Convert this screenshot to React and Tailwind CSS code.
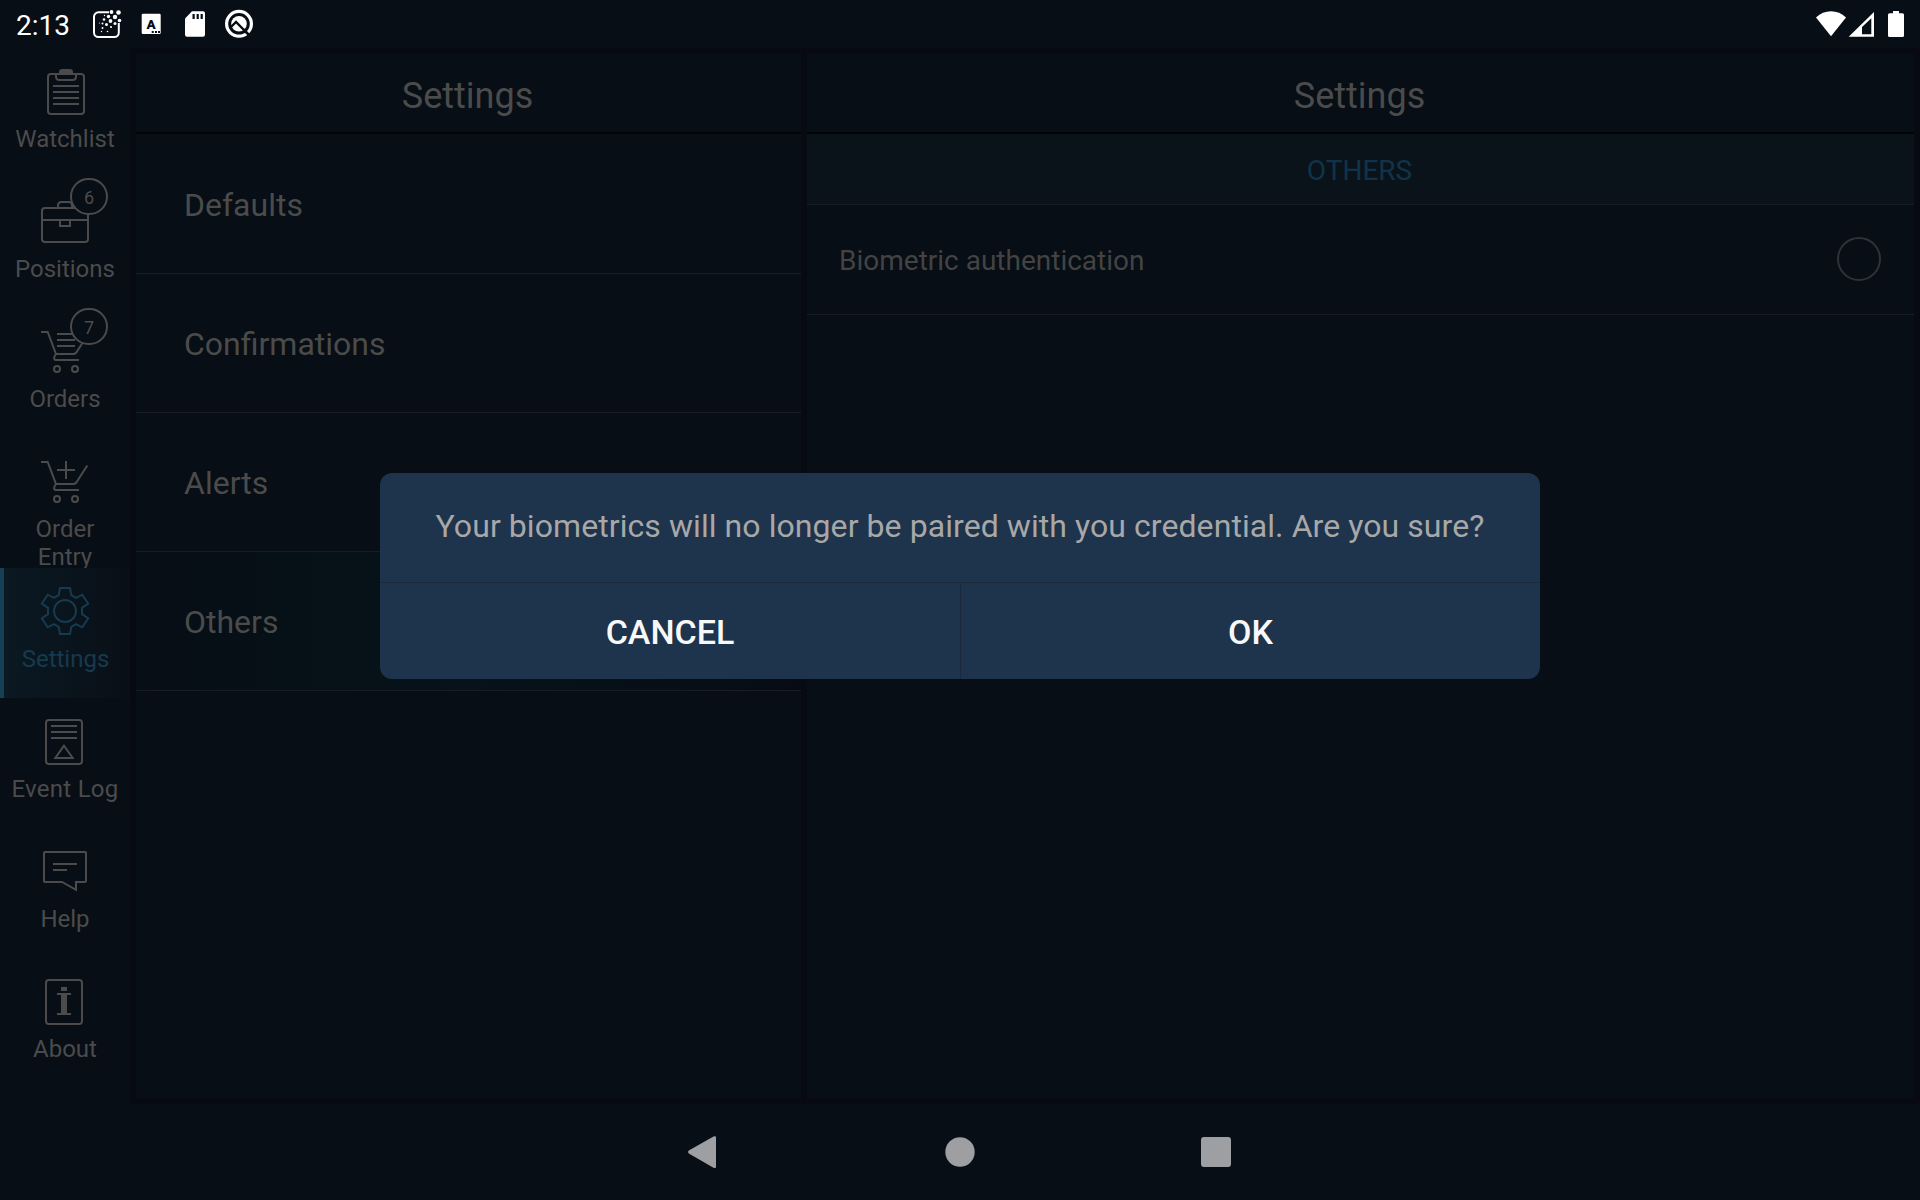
import React from "react";

const GEAR =
  "60,20 70,20 71.3,27 76,29.8 82.3,26.7 88.2,35.7 82,39.8 82,46.2 88.2,50.3 82.3,59.3 76,56.2 71.3,59 70,66 60,66 58.7,59 54,56.2 47.7,59.3 41.8,50.3 48,46.2 48,39.8 41.8,35.7 47.7,26.7 54,29.8 58.7,27";

function Cart() {
  return (
    <>
      <path d="M41 24h6.7L56 46h17.5q2.6 0 4-3.3L87.3 27.5" />
      <path d="M56 46q-2.6 3.4-1.7 5 .5 1 1.7 1h23" />
      <circle cx="57" cy="61" r="3" />
      <circle cx="75" cy="61" r="3" />
    </>
  );
}

const ICONS = {
  watchlist: (
    <>
      <rect x="48" y="26" width="36" height="40" rx="3" />
      <path d="M59 26v-2q0-3 3-3h8q3 0 3 3v2z" fill="currentColor" stroke="none" />
      <path d="M56 26v2.5q0 3.5 3.5 3.5h13q3.500 0 3.500-3.500V26M53 38h26M53 44h26M53 50h26M53 56h26" />
    </>
  ),
  positions: (
    <>
      <rect x="42" y="30" width="46" height="34" rx="3" />
      <path d="M42 42h46M60 42v6h10v-6M58 30v-2.500q0-3.500 3.500-3.500h7q3.500 0 3.500 3.500V30" />
    </>
  ),
  orders: (
    <>
      <Cart />
      <path d="M57 26h18M57 32h18M57 38h18" />
    </>
  ),
  entry: (
    <>
      <Cart />
      <path d="M66 23v18M57 32h18" />
    </>
  ),
  settings: (
    <>
      <polygon points={GEAR} />
      <circle cx="65" cy="43" r="11" />
    </>
  ),
  log: (
    <>
      <rect x="46" y="22" width="36" height="44" rx="3" />
      <path d="M51 28h26M51 34h26M51 40h26M64 47.700L55.300 60h17.400z" />
    </>
  ),
  help: (
    <>
      <path d="M45 24h40q1 0 1 1v28q0 1-1 1h-9v7.800L62 54H45q-1 0-1-1V25q0-1 1-1z" />
      <path d="M53 36h24M53 42h14" />
    </>
  ),
  about: (
    <>
      <rect x="46" y="22" width="36" height="44" rx="3" />
      <path d="M61 29h6v4h-6zM57 35h14v2h-4v18h4v2H57v-2h4V37h-4z" fill="currentColor" stroke="none" />
    </>
  ),
};

const NAV = [
  { icon: "watchlist", label: "Watchlist" },
  { icon: "positions", label: "Positions", badge: "6" },
  { icon: "orders", label: "Orders", badge: "7" },
  { icon: "entry", label: "Order Entry" },
  { icon: "settings", label: "Settings", active: true },
  { icon: "log", label: "Event Log" },
  { icon: "help", label: "Help" },
  { icon: "about", label: "About" },
];

const LABEL_STYLE = {
  "Order Entry": "",
  "Event Log": "-mx-5 whitespace-nowrap tracking-[0.25px]",
  Settings: "-mx-5 pl-px whitespace-nowrap",
};

function NavItem({ icon, label, badge, active }) {
  return (
    <div
      className={
        active
          ? "relative h-[130px] overflow-hidden border-l-4 border-[#173f56] bg-linear-to-r from-[#0a1922] to-[#090f17] text-[#163a4e]"
          : "relative h-[130px] overflow-hidden text-[#4b4b4b]"
      }
    >
      <div className={active ? "-ml-1 flex flex-col items-center" : "flex flex-col items-center"}>
        <svg className="h-[77px] w-[130px]" viewBox="0 0 130 77" fill="none" stroke="currentColor" strokeWidth="2">
          {ICONS[icon]}
        </svg>
        <span className="w-[120px] px-2.5 text-center text-2xl leading-7">
          <span className={LABEL_STYLE[label] ?? "-mx-5 whitespace-nowrap"}>{label}</span>
        </span>
      </div>
      {badge && (
        <span className="absolute top-0 left-[70px] flex h-[37px] w-[38px] items-center justify-center rounded-full border-2 border-[#4b4b4b] bg-[#070e15] pt-[3px] text-lg leading-none">
          {badge}
        </span>
      )}
    </div>
  );
}

const DOTS = [
  [118.500, 12.500, 2.300], [111.500, 12, 1.900], [115, 17, 2.200], [119.500, 20.500, 1.800], [108.500, 16.500, 1.700],
  [110.500, 21, 1.900], [115, 23.500, 1.500], [104, 19.500, 1.300], [106.500, 24.500, 1.500], [111, 27, 1.100],
  [102.500, 23.500, 1], [102.500, 28, 1], [107.500, 31.500, 0.800], [99.500, 23, 0.600], [101.500, 31.500, 0.700], [104.500, 15.500, 0.700],
];

function StatusBar() {
  return (
    <div className="flex h-12 items-center justify-between">
      <div className="flex items-center">
        <span className="w-[84px] pt-[3px] pl-4 text-[28px] leading-none text-white">2:13</span>
        <svg className="h-12 w-[180px] text-white" viewBox="84 0 180 48" fill="none">
          <path d="M109 12.300H98.500a4.500 4.500 0 0 0-4.500 4.500v15.700a4.500 4.500 0 0 0 4.500 4.500h15.800a4.500 4.500 0 0 0 4.500-4.500V23" stroke="currentColor" strokeWidth="2" />
          {DOTS.map(([x, y, r], i) => (
            <circle key={i} cx={x} cy={y} r={r} fill="currentColor" />
          ))}
          <rect x="141.700" y="13.700" width="19" height="20.300" rx="1.300" fill="currentColor" />
          <text x="151.200" y="28.700" textAnchor="middle" fontSize="13.500" fontWeight="900" fill="#070e15">A</text>
          <path d="M151.700 32h2M155 32h2M158 32h2" stroke="#070e15" strokeWidth="1.800" />
          <path d="M192 11.300h11a2 2 0 0 1 2 2v21.400a2 2 0 0 1-2 2h-16a2 2 0 0 1-2-2V18.500z" fill="currentColor" />
          <path d="M193.600 14v5M197.700 14v5M201.700 14v5" stroke="#070e15" strokeWidth="2.200" />
          <circle cx="239" cy="23.800" r="12.400" stroke="currentColor" strokeWidth="3.200" />
          <circle cx="239" cy="23.800" r="7.800" fill="currentColor" />
          <path d="M230.500 27.500l5.500-5.500 8.500 8.500" stroke="#070e15" strokeWidth="2.400" />
          <path d="M243.500 29.500l6 6" stroke="#070e15" strokeWidth="2.600" />
        </svg>
      </div>
      <svg className="h-12 w-[120px] text-white" viewBox="1800 0 120 48" fill="currentColor">
        <path d="M1831 36.300L1816 17.500q6.500-6.300 15-6.300t15 6.300z" />
        <path fillRule="evenodd" d="M1848.700 36.700L1874 12v24.700zM1862 34.300h9.300V18.200L1862 27z" />
        <path d="M1893 11h6v2.300h3.500q1.500 0 1.500 1.500v20.700q0 1.500-1.500 1.500h-13q-1.500 0-1.500-1.500V14.800q0-1.500 1.500-1.500h3.500z" />
      </svg>
    </div>
  );
}

function Header() {
  return (
    <div className="flex h-20 items-center justify-center border-b-2 border-[#020406] pt-1.5 pr-0.5 text-4xl leading-none text-[#4b4b4b]">
      Settings
    </div>
  );
}

const SECTIONS = ["Defaults", "Confirmations", "Alerts", "Others"];

function Dialog() {
  return (
    <div className="absolute top-[473px] left-[380px] flex h-[206px] w-[1160px] flex-col overflow-hidden rounded-xl bg-[#1e334c]">
      <div className="flex h-[110px] items-center justify-center border-b border-[#1a2a3b] pb-[3px] text-[32px] leading-none tracking-[0.07px] text-[#a8a8a8]">
        Your biometrics will no longer be paired with you credential. Are you sure?
      </div>
      <div className="flex flex-1 text-[34px] leading-none font-medium text-[#f8f8f8]">
        <button className="flex w-[581px] items-center justify-center border-r border-[#1a2a3b] pt-[2px]">CANCEL</button>
        <button className="flex flex-1 items-center justify-center pt-[2px]">OK</button>
      </div>
    </div>
  );
}

export default function App() {
  return (
    <div className="relative flex h-[1200px] w-[1920px] flex-col overflow-hidden bg-[#070e15] font-['Roboto',sans-serif]">
      <StatusBar />
      <div className="flex h-[1056px]">
        <nav className="w-[130px]">
          {NAV.map((item) => (
            <NavItem key={item.label} {...item} />
          ))}
        </nav>
        <div className="flex flex-1 gap-1.5 bg-[#070a12] p-1.5">
          <section className="w-[665px] bg-[#070e15]">
            <Header />
            {SECTIONS.map((name, i) => (
              <div
                key={name}
                className={
                  (i === 0 ? "h-[140px] pt-[3px] " : "h-[139px] pt-px ") +
                  (name === "Others" ? "bg-linear-to-r from-[#070e15] via-[#06131a] to-[#070c14] " : "") +
                  "flex items-center border-b border-[#181c23] pl-12 text-[32px] leading-none text-[#4b4b4b]"
                }
              >
                {name}
              </div>
            ))}
          </section>
          <section className="flex-1 bg-[#070e15]">
            <Header />
            <div className="flex h-[71px] items-center justify-center border-b border-[#181c23] bg-[#0a1319] pt-[3px] pr-0.5 text-[28px] leading-none text-[#11334a]">
              OTHERS
            </div>
            <div className="flex h-[110px] items-center justify-between border-b border-[#181c23] pr-[33px] pl-8">
              <span className="pt-[3px] text-[28px] leading-none text-[#434343]">Biometric authentication</span>
              <span className="mb-px size-11 rounded-full border-2 border-[#303235]" />
            </div>
          </section>
        </div>
      </div>
      <div className="flex flex-1 items-center justify-center">
        <svg className="h-12 w-[560px]" viewBox="680 1128 560 48" fill="#9e9fa2">
          <path d="M688.800 1150.500L713.500 1136.600q2.500-1.200 2.500 1v29.200q0 2.200-2.500 1L688.800 1153.500q-1.800-1.500 0-3z" />
          <circle cx="960" cy="1152" r="14.700" />
          <rect x="1201" y="1137" width="30" height="30" rx="3" />
        </svg>
      </div>
      <Dialog />
    </div>
  );
}
